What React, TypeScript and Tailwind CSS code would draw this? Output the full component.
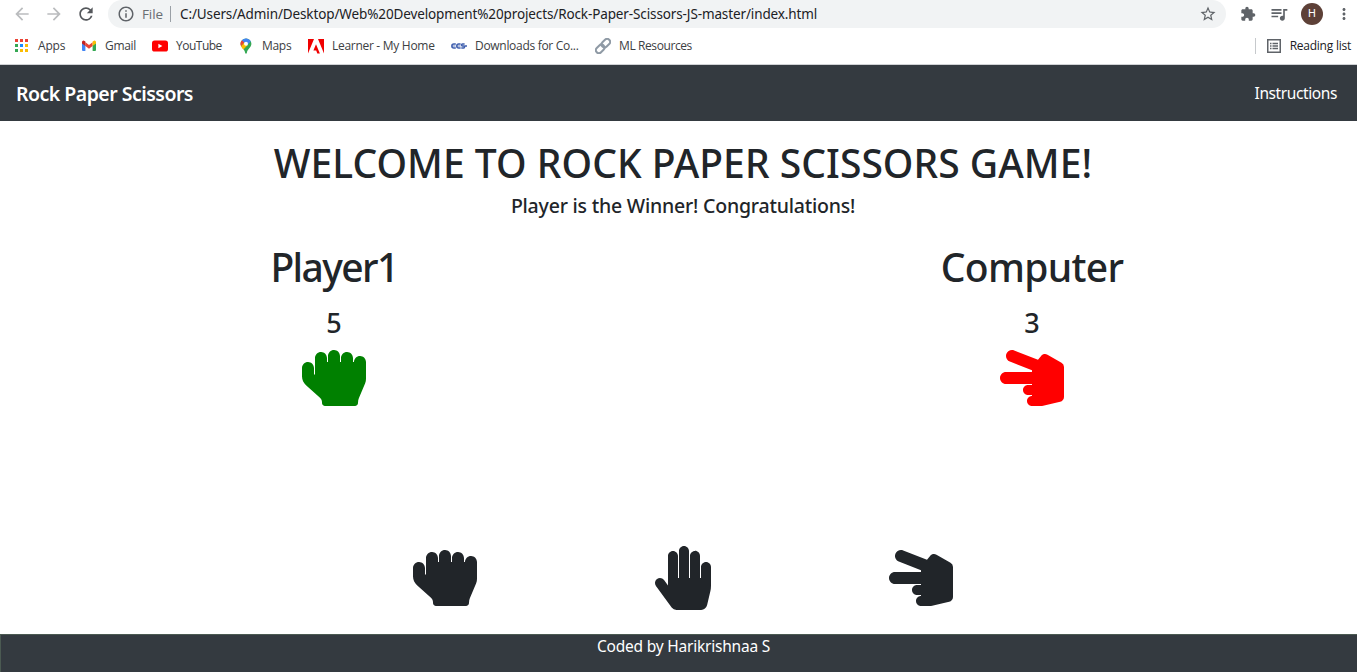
import React from "react";
import { FaHandPaper, FaHandRock, FaHandScissors } from "react-icons/fa";
import {
  MdArrowBack,
  MdArrowForward,
  MdExtension,
  MdInfoOutline,
  MdMoreVert,
  MdQueueMusic,
  MdRefresh,
  MdStarBorder,
} from "react-icons/md";

function AppsIcon() {
  const colors = ["#ea4335", "#ea4335", "#ea4335", "#34a853", "#1a8cff", "#fbbc04", "#34a853", "#fbbc04", "#fbbc04"];
  return (
    <svg width="16" height="16" viewBox="0 0 16 16" shapeRendering="crispEdges">
      {colors.map((c, i) => (
        <rect key={i} x={1 + (i % 3) * 5} y={1 + Math.floor(i / 3) * 5} width="3" height="3" fill={c} />
      ))}
    </svg>
  );
}

function GmailIcon() {
  return (
    <svg width="16" height="16" viewBox="0 0 16 16">
      <path d="M1 4.5V12a1 1 0 0 0 1 1h2.4V7z" fill="#4285f4" />
      <path d="M15 4.5V12a1 1 0 0 1-1 1h-2.4V7z" fill="#34a853" />
      <path d="M4.4 4.2V8L8 10.8 11.6 8V4.2L8 7z" fill="#ea4335" />
      <path d="M1 4.8V4a1.5 1.5 0 0 1 2.5-1.1l.9.7V8L1 5.5z" fill="#c5221f" />
      <path d="M15 4.8V4a1.5 1.5 0 0 0-2.5-1.1l-.9.7V8L15 5.5z" fill="#fbbc04" />
    </svg>
  );
}

function YouTubeIcon() {
  return (
    <svg width="16" height="16" viewBox="0 0 16 16">
      <rect x="0" y="2.5" width="16" height="11" rx="2.6" fill="#f00" />
      <path d="M6.4 5.7v4.6L10.4 8z" fill="#fff" />
    </svg>
  );
}

function MapsIcon() {
  return (
    <svg width="16" height="16" viewBox="0 0 16 16">
      <path d="M8 .4a5.4 5.4 0 0 1 5.4 5.4c0 3.8-4 5.2-4.6 9.2-.2 1.1-1.4 1.1-1.6 0C6.6 11 2.6 9.6 2.6 5.8A5.4 5.4 0 0 1 8 .4z" fill="#34a853" />
      <path d="M3.100 8.300 10 .8 3.900 2.300A5.400 5.400 0 0 0 3.100 8.300z" fill="#ea4335" />
      <path d="M3.100 8.200c.5 1.200 1.400 2.200 2.300 3.300L9.800 7 6.500 4.300z" fill="#fbbc04" />
      <path d="M3.9 2.3A5.4 5.4 0 0 1 12.8 3.3L9.5 7 6.2 4.4z" fill="#4285f4" />
      <circle cx="8" cy="5.8" r="2" fill="#fff" />
    </svg>
  );
}

function AdobeIcon() {
  return (
    <svg width="16" height="16" viewBox="0 0 16 16">
      <path d="M0 1h6L0 15.5zM10 1h6v14.5zM8 6.2l3.9 9.3H9.3L8.200 12.500H5.400z" fill="#f00000" />
    </svg>
  );
}

function CcsIcon() {
  return (
    <svg width="16" height="16" viewBox="0 0 16 16" fill="none" stroke="#3f5fae" strokeWidth="1.6">
      <path d="M4.800 6H2.800Q.9 6 .9 8t1.900 2h2M9.600 6H7.700Q5.800 6 5.800 8t1.900 2h1.900M13.600 6h-2.200q-.8 0-.8 1t.8 1h1.300q.8 0 .8 1t-.8 1h-2.400M13.500 8H16" />
      <path d="M1.500 8h3M6.500 8h3" strokeWidth=".8" />
    </svg>
  );
}

function LinkIcon() {
  return (
    <svg width="16" height="16" viewBox="0 0 16 16" fill="none" stroke="#8f9aa5" strokeWidth="2">
      <g transform="rotate(-45 8 8)">
        <rect x="-.8" y="5" width="9.600" height="6" rx="3" />
        <rect x="7.200" y="5" width="9.600" height="6" rx="3" />
      </g>
    </svg>
  );
}

interface BookmarkProps {
  icon: React.ReactNode;
  label: string;
  className: string;
}

function Bookmark({ icon, label, className }: BookmarkProps) {
  return (
    <div className={`flex shrink-0 items-center gap-2 ${className}`}>
      <span className="flex w-4 shrink-0 items-center justify-center">{icon}</span>
      <span>{label}</span>
    </div>
  );
}

function BrowserChrome() {
  return (
    <header className="flex h-[65px] flex-col border-b border-[#d0d2d5] bg-white font-['Open_Sans',sans-serif] text-[#3c4043]">
      <div className="flex h-7 items-center">
        <div className="flex w-[108px] shrink-0 items-center gap-3 pl-3 text-[20px]">
          <MdArrowBack className="text-[#babcbe]" />
          <MdArrowForward className="text-[#babcbe]" />
          <MdRefresh className="text-[#55585c]" />
        </div>
        <div className="flex h-7 w-[1118px] shrink-0 items-center rounded-full bg-[#f1f3f4] px-[9px] text-[13.5px]">
          <MdInfoOutline className="text-[18px] text-[#5f6368]" />
          <span className="ml-[7px] w-7 tracking-[-0.1px] text-[#6a6e73]">File</span>
          <span className="h-4 w-px bg-[#9aa0a6]" />
          <span className="ml-[9px] whitespace-nowrap font-['Noto_Sans',sans-serif] tracking-[-0.12px] text-[#202124]">
            C:/Users/Admin/Desktop/Web%20Development%20projects/Rock-Paper-Scissors-JS-master/index.html
          </span>
          <MdStarBorder className="ml-auto text-[18px] text-[#5f6368]" />
        </div>
        <div className="flex flex-1 items-center text-[#5f6368]">
          <MdExtension className="ml-[14px] text-[16px]" />
          <MdQueueMusic className="ml-[13px] text-[20px]" />
          <span className="ml-3 flex size-[22px] items-center justify-center rounded-full bg-[#5d4037] font-['Roboto',sans-serif] text-[11px] text-white">
            H
          </span>
          <MdMoreVert className="ml-[12px] text-[18px]" />
        </div>
      </div>
      <div className="flex h-9 items-center whitespace-nowrap pl-[14px] text-[12px]">
        <Bookmark icon={<AppsIcon />} label="Apps" className="w-[67px] tracking-[-0.2px]" />
        <Bookmark icon={<GmailIcon />} label="Gmail" className="w-[71px] tracking-[-0.3px]" />
        <Bookmark icon={<YouTubeIcon />} label="YouTube" className="w-[86px] tracking-[-0.5px]" />
        <Bookmark icon={<MapsIcon />} label="Maps" className="w-[70px] tracking-[-0.3px]" />
        <Bookmark icon={<AdobeIcon />} label="Learner - My Home" className="w-[143px] tracking-[-0.29px]" />
        <Bookmark icon={<CcsIcon />} label="Downloads for Co..." className="w-[144px] tracking-[-0.3px]" />
        <Bookmark icon={<LinkIcon />} label="ML Resources" className="tracking-[-0.4px]" />
        <div className="ml-auto flex items-center pr-[6px]">
          <span className="h-4 w-px bg-[#c6c9cc]" />
          <svg className="ml-[11px]" width="14" height="14" viewBox="0 0 14 14" fill="none" stroke="#5f6368">
            <rect x=".75" y=".75" width="12.5" height="12.5" strokeWidth="1.5" />
            <path d="M3 4.5h1.5M3 7h1.5M3 9.5h1.5M5.500 4.500H11M5.500 7H11M5.500 9.500H11" strokeWidth="1.3" />
          </svg>
          <span className="ml-[9px] tracking-[-0.24px] text-[#202124]">Reading list</span>
        </div>
      </div>
    </header>
  );
}

interface PlayerProps {
  name: string;
  nameClass: string;
  score: number;
  hand: React.ReactNode;
}

function Player({ name, nameClass, score, hand }: PlayerProps) {
  return (
    <section className="flex w-[698px] shrink-0 flex-col items-center">
      <h2 className={`text-[39px] leading-[48px] ${nameClass}`}>{name}</h2>
      <p className="mt-[15px] text-[27px] leading-[34px]">{score}</p>
      <div className="mt-[6px] text-[64px]">{hand}</div>
    </section>
  );
}

export default function App() {
  return (
    <div className="h-[672px] w-full overflow-hidden bg-white">
      <BrowserChrome />
      <div className="flex h-[607px] w-[1366px] flex-col overflow-hidden font-['Noto_Sans',sans-serif] text-[#212529]">
        <nav className="flex h-14 shrink-0 items-center justify-between bg-[#343a40] pl-4 pr-[29px] pt-0.5 text-white">
          <span className="text-[19.5px] font-semibold tracking-[-0.52px]">Rock Paper Scissors</span>
          <span className="text-[15.5px] tracking-[-0.4px]">Instructions</span>
        </nav>
        <main className="flex h-[513px] shrink-0 flex-col items-center pt-[18px] font-medium">
          <h1 className="whitespace-nowrap text-[39px] leading-[48px] tracking-[0.04px]">
            WELCOME TO ROCK PAPER SCISSORS GAME!
          </h1>
          <p className="mt-[7px] text-[19.5px] leading-6 tracking-[-0.21px]">Player is the Winner! Congratulations!</p>
          <div className="mt-[25px] flex justify-center">
            <Player name="Player1" nameClass="tracking-[-1.6px]" score={5} hand={<FaHandRock className="text-[#008000]" />} />
            <Player name="Computer" nameClass="tracking-[-0.7px]" score={3} hand={<FaHandScissors className="text-[#ff0000]" />} />
          </div>
          <div className="mt-[136px] grid grid-cols-[238px_238px_238px] justify-items-center text-[64px]">
            <FaHandRock />
            <FaHandPaper />
            <FaHandScissors />
          </div>
        </main>
        <footer className="flex-1 border-l border-t border-[#4b5a52] bg-[#343a40] text-center text-[15.5px] leading-[23px] tracking-[-0.21px] text-white">
          Coded by Harikrishnaa S
        </footer>
      </div>
    </div>
  );
}
